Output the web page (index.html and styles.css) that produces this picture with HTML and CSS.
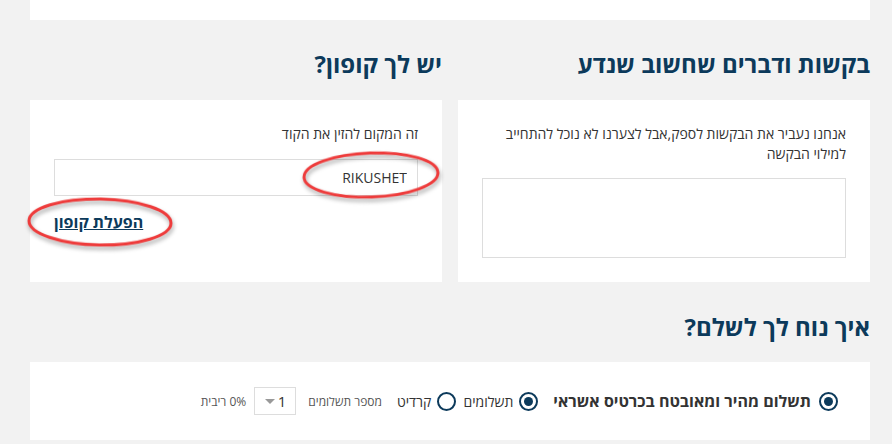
FILE: index.html
```html
<!DOCTYPE html>
<html lang="he" dir="rtl">
<head>
    <meta charset="UTF-8" />
    <title>תשלום</title>
    <link rel="stylesheet" href="styles.css">
</head>
<body>
    <div class="page">
        <div class="top-card"></div>

        <div class="two-cols">
            <!-- requests -->
            <section class="col">
                <h2>בקשות ודברים שחשוב שנדע</h2>
                <div class="card">
                    <p class="note">אנחנו נעביר את הבקשות לספק,אבל לצערנו לא נוכל להתחייב למילוי הבקשה</p>
                    <textarea class="requests"></textarea>
                </div>
            </section>

            <!-- coupon -->
            <section class="col">
                <h2>יש לך קופון?</h2>
                <div class="card coupon">
                    <p class="note">זה המקום להזין את הקוד</p>
                    <input type="text" class="code" value="RIKUSHET" />
                    <div class="apply-row"><a href="#" class="apply">הפעלת קופון</a></div>
                    <svg class="marks" width="412" height="182" viewBox="0 0 412 182">
                        <ellipse cx="341" cy="75" rx="67" ry="22" transform="rotate(-2 341 75)" />
                        <ellipse cx="70" cy="122" rx="71" ry="23" transform="rotate(1 70 122)" />
                    </svg>
                </div>
            </section>
        </div>

        <h2 class="pay-title">איך נוח לך לשלם?</h2>
        <div class="card pay">
            <label class="opt main"><span class="radio on"></span>תשלום מהיר ומאובטח בכרטיס אשראי</label>
            <label class="opt"><span class="radio on"></span>תשלומים</label>
            <label class="opt"><span class="radio"></span>קרדיט</label>
            <span class="small">מספר תשלומים</span>
            <div class="select"><span>1</span><span class="arrow"></span></div>
            <span class="small">0% ריבית</span>
        </div>
    </div>
</body>
</html>
```

FILE: styles.css
```css
body { margin: 0; background: #f2f2f2; font-family: "Open Sans", "Liberation Sans", sans-serif; color: #333; }
.page { padding: 0 22px 0 30px; }
.top-card { height: 20px; background: #fff; }
h2 { margin: 0; padding: 27px 0 0; height: 53px; font-size: 24px; font-weight: 700; color: #0c3a5b; line-height: 34px; }
.pay-title { height: 52px; padding-top: 28px; }
.two-cols { display: grid; grid-template-columns: 1fr 1fr; gap: 16px; }
.card { background: #fff; position: relative; }
.col .card { height: 182px; box-sizing: border-box; padding: 24px 24px 0; }
.note { margin: 0; font-size: 14px; line-height: 19.5px; }
.requests { display: block; width: 100%; height: 80px; margin-top: 15px; box-sizing: border-box; border: 1px solid #ddd; resize: none; }
.code { display: block; width: 100%; height: 37px; margin-top: 15px; box-sizing: border-box; border: 1px solid #ddd; padding: 0 10px; font-family: inherit; font-size: 14px; color: #333; }
.apply-row { text-align: left; margin-top: 15px; }
.apply { font-size: 16px; font-weight: 700; color: #0c3a5b; }
.marks { position: absolute; left: 0; top: 0; overflow: visible; pointer-events: none; }
.marks ellipse { fill: none; stroke: #ee3b3b; stroke-width: 3; filter: drop-shadow(1px 3px 2px rgba(0,0,0,0.35)); }
.pay { height: 78px; display: flex; align-items: center; padding-right: 32px; font-size: 14px; }
.opt { display: flex; align-items: center; gap: 6px; margin-left: 7px; }
.opt.main { font-size: 16px; font-weight: 700; margin-left: 15px; gap: 8px; }
.radio { width: 19px; height: 19px; box-sizing: border-box; border: 2.5px solid #0c3a5b; border-radius: 50%; display: flex; align-items: center; justify-content: center; }
.radio.on::after { content: ""; width: 9px; height: 9px; border-radius: 50%; background: #0c3a5b; }
.small { font-size: 12px; color: #555; }
.opt + .small { margin-right: 8px; }
.select { width: 42px; height: 28px; box-sizing: border-box; border: 1px solid #ddd; display: flex; align-items: center; justify-content: space-between; padding: 0 9px 0 10px; margin: 0 12px 0 8px; font-size: 15px; }
.arrow { width: 0; height: 0; border-left: 5px solid transparent; border-right: 5px solid transparent; border-top: 5px solid #999; }
```
